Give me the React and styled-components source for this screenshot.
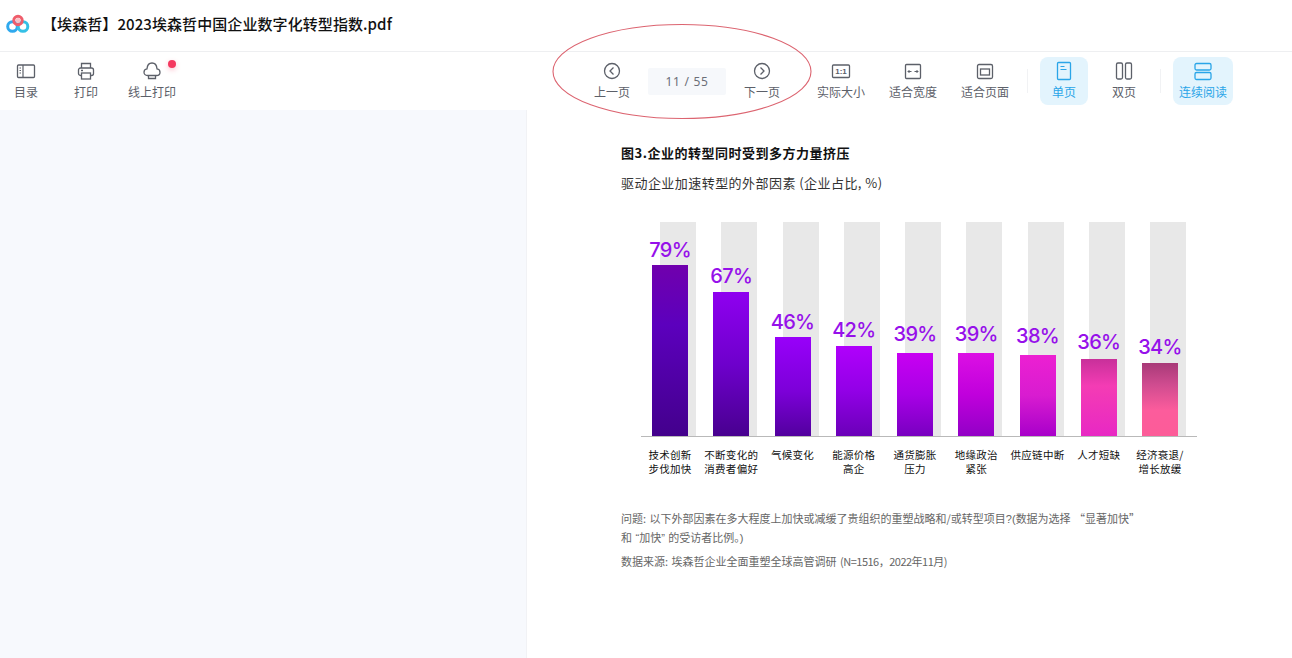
import React from "react";
import styled, { createGlobalStyle } from "styled-components";

const Global = createGlobalStyle`
  html, body { margin: 0; padding: 0; background: #fff; overflow: hidden; }
  body { font-family: "Noto Sans CJK SC", "Liberation Sans", sans-serif; }
`;
const Page = styled.div`
  width: 1292px; height: 658px; display: flex; flex-direction: column;
  overflow: hidden; position: relative;
`;
const Header = styled.header`
  height: 48px; padding: 0 0 3px 6px; border-bottom: 1px solid #eeeff1;
  display: flex; align-items: center; gap: 12px; flex: none;
`;
const Title = styled.h1`
  margin: 0; font-size: 15px; font-weight: 500; color: #111; line-height: 20px;
  letter-spacing: .08px;
`;
const Toolbar = styled.nav`height: 58px; flex: none; display: flex;`;
const Tool = styled.div`
  width: ${p => p.$w || 48}px; height: 48px; margin: 5px 0 0 ${p => p.$ml || 0}px; flex: none;
  display: flex; flex-direction: column; align-items: center; padding-top: 4px; box-sizing: border-box;
  border-radius: 8px; background: ${p => (p.$active ? "#e3f4fd" : "transparent")};
  color: ${p => (p.$active ? "#2aa5e8" : "#5c6069")}; position: relative;
`;
const ToolIcon = styled.svg`
  width: 20px; height: 20px; fill: none; stroke: currentColor; stroke-width: 1.3; flex: none;
`;
const ToolLabel = styled.span`font-size: 12px; line-height: 16px; margin-top: 3px; white-space: nowrap;`;
const Dot = styled.span`
  position: absolute; top: 3px; right: 4px; width: 8px; height: 8px; border-radius: 50%;
  background: #f4385f; box-shadow: 0 2px 5px rgba(244, 56, 95, .3);
`;
const PageBox = styled.div`
  width: 78px; height: 27px; margin: 16px 0 0 12px; flex: none; background: #f6f8fb; border-radius: 2px;
  display: flex; align-items: center; justify-content: center; font-size: 12px; letter-spacing: .7px;
  color: #6b6f78; font-family: "Noto Sans", sans-serif;
`;
const Sep = styled.span`
  width: 1px; height: 24px; margin: 17px 0 0 ${p => p.$ml}px; background: #f1f2f4; flex: none;
`;
const Oval = styled.svg`
  position: absolute; left: 553px; top: 24px; width: 258px; height: 95px; overflow: visible;
  fill: none; stroke: #dc6470; stroke-width: 1.1; pointer-events: none;
`;
const Body = styled.main`flex: 1; display: flex; min-height: 0;`;
const Side = styled.aside`
  width: 527px; flex: none; background: #f7f9fd; border-right: 1px solid #f1f2f5; box-sizing: border-box;
`;
const Doc = styled.section`flex: 1; padding: 33px 0 0 94px; color: #111;`;
const FigTitle = styled.h2`
  margin: 0; font-size: 13px; line-height: 20px; font-weight: 700; letter-spacing: .5px; color: #111;
`;
const FigSub = styled.p`
  margin: 10px 0 0; font-size: 13px; line-height: 20px; letter-spacing: .45px; color: #333;
`;
const Chart = styled.div`
  margin: 29px 0 0 20px; width: 556px; height: 215px; border-bottom: 1px solid #b9b9b9;
  display: flex; padding-left: 11px; box-sizing: border-box; gap: 25.25px;
`;
const Column = styled.div`width: 36px; height: 100%; position: relative; flex: none;`;
const Track = styled.div`position: absolute; left: 8px; top: 0; width: 36px; height: 100%; background: #e8e8e8;`;
const Bar = styled.div`
  position: absolute; left: 0; bottom: 0; width: 36px; height: ${p => p.$h}px; background: ${p => p.$fill};
`;
const Value = styled.span`
  position: absolute; left: 50%; transform: translateX(-50%); bottom: 100%; margin-bottom: ${p => p.$lift}px;
  font-family: "Inter", "Liberation Sans", sans-serif; font-size: 20px; font-weight: 500; line-height: 24px;
  letter-spacing: -.7px; color: #9610ea; white-space: nowrap;
`;
const Labels = styled.div`display: flex; margin: 11px 0 0 18.4px;`;
const Label = styled.div`
  width: 61.25px; flex: none; text-align: center; font-size: 10.5px; line-height: 13.5px; color: #111;
  white-space: pre-line; letter-spacing: .28px;
`;
const Note = styled.p`
  margin: ${p => p.$mt}px 0 0; font-size: 11px; line-height: 18.5px; color: #666; white-space: pre;
  word-spacing: 1px;
`;
const Narrow = styled.span`font-family: "Liberation Sans", sans-serif; line-height: 0;`;
const Tight = styled.span`letter-spacing: -.5px;`;
const LogoMark = styled.svg`width: 24px; height: 20px; flex: none; fill: none;`;

const Logo = () => (
  <LogoMark viewBox="0 0 24 20">
    <circle cx="6.500" cy="12.500" r="4.800" stroke="#2fa9ee" strokeWidth="3" />
    <circle cx="17" cy="12.500" r="4.800" stroke="#35c0e6" strokeWidth="3" />
    <circle cx="12" cy="6.500" r="4.200" stroke="#ef5d6b" strokeWidth="3" />
    <circle cx="12" cy="6.500" r="2.500" fill="#f9c0c6" />
  </LogoMark>
);
const I = ({ children }) => <ToolIcon viewBox="0 0 20 20">{children}</ToolIcon>;

const bars = [
  { v: "79%", h: 171, lift: 3, g: "linear-gradient(180deg,#7000ad 0%,#5c00bd 35%,#43008c 100%)", l: "技术创新\n步伐加快" },
  { v: "67%", h: 144, lift: 4, g: "linear-gradient(180deg,#8f00f0 0%,#6e00cc 50%,#48008f 100%)", l: "不断变化的\n消费者偏好" },
  { v: "46%", h: 99, lift: 3, g: "linear-gradient(180deg,#9800fa 0%,#7c00d8 55%,#52009e 100%)", l: "气候变化" },
  { v: "42%", h: 90, lift: 4, g: "linear-gradient(180deg,#b000fc 0%,#9200e6 50%,#6a00b8 100%)", l: "能源价格\n高企" },
  { v: "39%", h: 83, lift: 7, g: "linear-gradient(180deg,#c800f2 0%,#a800e6 50%,#7800c0 100%)", l: "通货膨胀\n压力" },
  { v: "39%", h: 83, lift: 7, g: "linear-gradient(180deg,#dc10e4 0%,#c000dc 50%,#9200c6 100%)", l: "地缘政治\n紧张" },
  { v: "38%", h: 81, lift: 7, g: "linear-gradient(180deg,#ec20d2 0%,#d81cd0 50%,#a800ca 100%)", l: "供应链中断" },
  { v: "36%", h: 77, lift: 5, g: "linear-gradient(180deg,#c8309a 0%,#f43cb4 35%,#e828c4 100%)", l: "人才短缺" },
  { v: "34%", h: 73, lift: 4, g: "linear-gradient(180deg,#a83a78 0%,#d04c90 30%,#fc5c9c 65%,#fc5c98 100%)", l: "经济衰退/\n增长放缓" },
];

export default function App() {
  return (
    <Page>
      <Global />
      <Header>
        <Logo />
        <Title>【埃森哲】2023埃森哲中国企业数字化转型指数.pdf</Title>
      </Header>
      <Toolbar>
        <Tool $ml={2}>
          <I>
            <rect x="1.500" y="4" width="17" height="12.500" rx="1" />
            <path d="M7 4v12.500M3.500 7h1.500M3.500 9.500h1.500M3.500 12h1.500" strokeWidth="1.200" />
          </I>
          <ToolLabel>目录</ToolLabel>
        </Tool>
        <Tool $ml={12}>
          <I>
            <path d="M5.500 7V2.500h9V7M5.500 14.500H4.500A2 2 0 0 1 2.500 12.500V9a2 2 0 0 1 2-2h11a2 2 0 0 1 2 2v3.500a2 2 0 0 1-2 2h-1" />
            <rect x="5.500" y="12" width="9" height="6" />
            <path d="M5 9.500h2" />
          </I>
          <ToolLabel>打印</ToolLabel>
        </Tool>
        <Tool $ml={14} $w={56}>
          <I>
            <path d="M5.500 14.500C3.500 14.500 2 13 2 11.200 2 9.400 3.300 8 5 7.800 5.300 4.300 7.400 2 10 2c2.600 0 4.700 2.300 5 5.800 1.700.2 3 1.600 3 3.400 0 1.800-1.500 3.300-3.500 3.300Z" />
            <path d="M6.500 14.500v3h7v-3" />
          </I>
          <ToolLabel>线上打印</ToolLabel>
          <Dot />
        </Tool>
        <Tool $ml={408}>
          <I>
            <circle cx="10" cy="10" r="7.500" />
            <path d="M11.500 6.500 8 10l3.500 3.500" />
          </I>
          <ToolLabel>上一页</ToolLabel>
        </Tool>
        <PageBox>11 / 55</PageBox>
        <Tool $ml={12}>
          <I>
            <circle cx="10" cy="10" r="7.500" />
            <path d="M8.500 6.500 12 10l-3.500 3.500" />
          </I>
          <ToolLabel>下一页</ToolLabel>
        </Tool>
        <Tool $ml={27} $w={56}>
          <I>
            <rect x="1.500" y="4" width="17" height="12.500" rx="1" />
            <text x="10" y="13" textAnchor="middle" fontSize="8" fontWeight="700" fill="currentColor" stroke="none" fontFamily="Liberation Sans, sans-serif">1:1</text>
          </I>
          <ToolLabel>实际大小</ToolLabel>
        </Tool>
        <Tool $ml={16} $w={56}>
          <I>
            <rect x="2.500" y="3.500" width="15" height="14" rx="1" />
            <path d="M5 10.500h3.500M11.500 10.500H15M6.500 9 5 10.500 6.500 12M13.500 9l1.500 1.500-1.500 1.500" strokeWidth="1" />
          </I>
          <ToolLabel>适合宽度</ToolLabel>
        </Tool>
        <Tool $ml={16} $w={56}>
          <I>
            <rect x="2.500" y="3.500" width="15" height="14" rx="1.500" />
            <rect x="5.500" y="8" width="9" height="6" />
          </I>
          <ToolLabel>适合页面</ToolLabel>
        </Tool>
        <Sep $ml={14} />
        <Tool $ml={12} $active>
          <I>
            <rect x="3.500" y="1.500" width="13" height="17" rx="1" />
            <path d="M6.500 5.500h4M6.500 8.500h6" strokeWidth="1.200" />
          </I>
          <ToolLabel>单页</ToolLabel>
        </Tool>
        <Tool $ml={12}>
          <I>
            <rect x="2.500" y="2" width="6" height="16" rx="1.500" />
            <rect x="11.500" y="2" width="6" height="16" rx="1.500" />
          </I>
          <ToolLabel>双页</ToolLabel>
        </Tool>
        <Sep $ml={12} />
        <Tool $ml={12} $w={60} $active>
          <I>
            <rect x="2" y="2.500" width="16" height="6.500" rx="1.500" />
            <rect x="2" y="11.500" width="16" height="7" rx="1.500" />
          </I>
          <ToolLabel>连续阅读</ToolLabel>
        </Tool>
      </Toolbar>
      <Body>
        <Side />
        <Doc>
          <FigTitle>图3.企业的转型同时受到多方力量挤压</FigTitle>
          <FigSub>驱动企业加速转型的外部因素 (企业占比, %)</FigSub>
          <Chart>
            {bars.map(b => (
              <Column key={b.l}>
                <Track />
                <Bar $h={b.h} $fill={b.g}>
                  <Value $lift={b.lift}>{b.v}</Value>
                </Bar>
              </Column>
            ))}
          </Chart>
          <Labels>
            {bars.map(b => (
              <Label key={b.l}>{b.l}</Label>
            ))}
          </Labels>
          <Note $mt={34}>
            问题: 以下外部因素在多大程度上加快或减缓了贵组织的重塑战略和/或转型项目
            <Narrow>?(</Narrow>
            数据为选择 “显著加快”
          </Note>
          <Note $mt={0}>
            {"和 "}
            <Narrow>“</Narrow>加快<Narrow>”</Narrow>
            {" 的受访者比例。"}
            <Narrow>)</Narrow>
          </Note>
          <Note $mt={6}>
            数据来源: 埃森哲企业全面重塑全球高管调研 <Tight>(N=1516，2022年11月)</Tight>
          </Note>
        </Doc>
      </Body>
      <Oval viewBox="0 0 258 95">
        <ellipse cx="129" cy="47.500" rx="129" ry="47" />
      </Oval>
    </Page>
  );
}
